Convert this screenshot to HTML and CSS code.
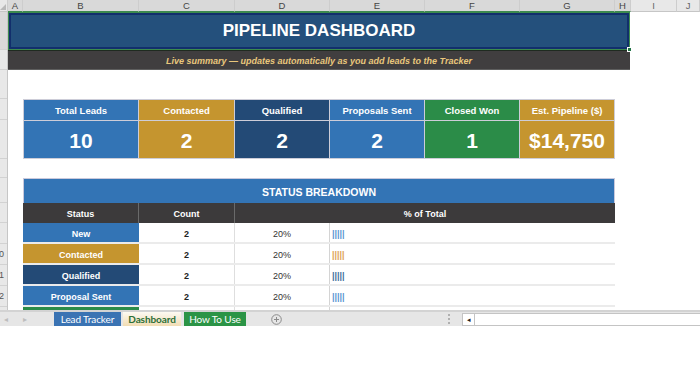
FILE: index.html
```html
<!DOCTYPE html>
<html lang="en">
<head>
    <meta charset="UTF-8">
    <meta name="viewport" content="width=device-width, initial-scale=1.0">
    <title>Pipeline Dashboard</title>
    <link rel="stylesheet" href="styles.css">
</head>
<body>
    <div class="colheads">
        <div class="corner"></div>
        <div class="colhead sel">A</div>
        <div class="colhead sel">B</div>
        <div class="colhead sel">C</div>
        <div class="colhead sel">D</div>
        <div class="colhead sel">E</div>
        <div class="colhead sel">F</div>
        <div class="colhead sel">G</div>
        <div class="colhead sel">H</div>
        <div class="colhead">I</div>
        <div class="colhead">J</div>
    </div>

    <div class="sheet">
        <div class="rowheads">
            <div class="rowhead sel h-title">1</div>
            <div class="rowhead h-sub">2</div>
            <div class="rowhead h-gap">3</div>
            <div class="rowhead h-khead">4</div>
            <div class="rowhead h-kval">5</div>
            <div class="rowhead h-gap2">6</div>
            <div class="rowhead h-sec">7</div>
            <div class="rowhead h-th">8</div>
            <div class="rowhead h-row">9</div>
            <div class="rowhead h-row num">10</div>
            <div class="rowhead h-row num">11</div>
            <div class="rowhead h-row num">12</div>
            <div class="rowhead h-row num">13</div>
        </div>

        <div class="cells">
            <div class="title">PIPELINE DASHBOARD<span class="handle"></span></div>
            <div class="subtitle">Live summary — updates automatically as you add leads to the Tracker</div>

            <div class="kpis">
                <div class="kpi-label blue">Total Leads</div>
                <div class="kpi-label gold">Contacted</div>
                <div class="kpi-label navy">Qualified</div>
                <div class="kpi-label blue">Proposals Sent</div>
                <div class="kpi-label green">Closed Won</div>
                <div class="kpi-label gold">Est. Pipeline ($)</div>
                <div class="kpi-value blue">10</div>
                <div class="kpi-value gold">2</div>
                <div class="kpi-value navy">2</div>
                <div class="kpi-value blue">2</div>
                <div class="kpi-value green">1</div>
                <div class="kpi-value gold">$14,750</div>
            </div>

            <div class="breakdown">
                <div class="sec-title">STATUS BREAKDOWN</div>
                <div class="thead">
                    <div>Status</div>
                    <div>Count</div>
                    <div>% of Total</div>
                </div>
                <div class="trow">
                    <div class="status blue">New</div>
                    <div class="count">2</div>
                    <div class="pct">20%</div>
                    <div class="bar bar-blue">|||||</div>
                </div>
                <div class="trow">
                    <div class="status gold">Contacted</div>
                    <div class="count">2</div>
                    <div class="pct">20%</div>
                    <div class="bar bar-gold">|||||</div>
                </div>
                <div class="trow">
                    <div class="status navy">Qualified</div>
                    <div class="count">2</div>
                    <div class="pct">20%</div>
                    <div class="bar bar-navy">|||||</div>
                </div>
                <div class="trow">
                    <div class="status blue">Proposal Sent</div>
                    <div class="count">2</div>
                    <div class="pct">20%</div>
                    <div class="bar bar-blue">|||||</div>
                </div>
                <div class="trow">
                    <div class="status green">Closed Won</div>
                    <div class="count">1</div>
                    <div class="pct">10%</div>
                    <div class="bar bar-green">||</div>
                </div>
            </div>
        </div>
    </div>

    <div class="tabbar">
        <div class="tabs-left">
            <span class="nav">&#9666;</span>
            <span class="nav">&#9656;</span>
            <div class="tab tab-lead">Lead Tracker</div>
            <div class="tab tab-dash">Dashboard</div>
            <div class="tab tab-how">How To Use</div>
            <svg class="add" width="11" height="11" viewBox="0 0 11 11">
                <circle cx="5.5" cy="5.5" r="4.8" fill="none" stroke="#8a8a8a" stroke-width="1"/>
                <path d="M5.5 3v5M3 5.5h5" stroke="#8a8a8a" stroke-width="1"/>
            </svg>
            <svg class="grip" width="3" height="10" viewBox="0 0 3 10">
                <rect x="0" y="0" width="2" height="2" fill="#b0b0b0"/>
                <rect x="0" y="4" width="2" height="2" fill="#b0b0b0"/>
                <rect x="0" y="8" width="2" height="2" fill="#b0b0b0"/>
            </svg>
        </div>
        <div class="hscroll">
            <div class="hscroll-btn">&#9666;</div>
        </div>
    </div>
</body>
</html>
```

FILE: styles.css
```css
body {
    margin: 0;
    width: 700px;
    height: 384px;
    overflow: hidden;
    background-color: white;
    font-family: "Liberation Sans", Arial, sans-serif;
}

/* column letters */
.colheads {
    display: grid;
    grid-template-columns: 8px 15px 116px 96px 95px 95px 95px 95px 16px 46px 1fr;
    height: 12px;
}
.colhead, .corner {
    box-sizing: border-box;
    background-color: #e8e8e8;
    border-right: 1px solid #cdcdcd;
    border-bottom: 1px solid #c6c6c6;
    font-size: 9.5px;
    line-height: 11px;
    color: #666;
    text-align: center;
}
.colhead.sel {
    background-color: #d9d9d9;
    border-bottom-color: #3c8a4e;
    color: #444;
}
.corner {
    display: flex;
    justify-content: flex-end;
    align-items: flex-end;
    padding: 0 1px 1px 0;
}
.corner::after {
    content: "";
    border-left: 6px solid transparent;
    border-bottom: 6px solid #b9b9b9;
}

/* sheet body */
.sheet {
    display: flex;
    height: 298px;
    overflow: hidden;
}
.rowheads {
    width: 8px;
    flex: none;
    box-sizing: border-box;
    background-color: #e8e8e8;
    border-right: 1px solid #c6c6c6;
}
.rowhead {
    box-sizing: border-box;
    border-bottom: 1px solid #d2d2d2;
    display: flex;
    align-items: center;
    justify-content: flex-end;
    padding-right: 3px;
    overflow: hidden;
    white-space: nowrap;
    font-size: 9px;
    color: transparent;
}
.rowhead.num {
    color: #555;
}
.rowhead.sel {
    background-color: #d9d9d9;
}
.h-title { height: 38px; }
.h-sub { height: 20px; }
.h-gap { height: 29px; }
.h-khead { height: 21px; }
.h-kval { height: 39px; }
.h-gap2 { height: 19px; }
.h-sec { height: 25px; }
.h-th { height: 20px; }
.h-row { height: 21px; }

.cells {
    flex: 1;
}

.blue { background-color: #3374b5; }
.gold { background-color: #c5952f; }
.navy { background-color: #234a76; }
.green { background-color: #2b8c48; }

/* title + subtitle */
.title {
    position: relative;
    width: 622px;
    height: 38px;
    box-sizing: border-box;
    display: flex;
    align-items: center;
    justify-content: center;
    background-color: #24507c;
    border: 1px solid #3c8a4e;
    box-shadow: inset 0 0 0 2px #122f6c;
    color: white;
    font-size: 17px;
    font-weight: bold;
}
.handle {
    position: absolute;
    right: -3px;
    bottom: -3px;
    width: 3px;
    height: 3px;
    background-color: #217346;
    border: 1px solid white;
}
.subtitle {
    width: 622px;
    height: 20px;
    box-sizing: border-box;
    display: flex;
    align-items: center;
    justify-content: center;
    padding-top: 1px;
    background-color: #403e3f;
    border-top: 1px solid #1f2a20;
    border-bottom: 1px solid #5e5e5e;
    color: #e9c77c;
    font-size: 9px;
    font-weight: bold;
    font-style: italic;
}

/* KPI cards */
.kpis {
    margin: 29px 0 0 15px;
    width: 592px;
    box-sizing: border-box;
    display: grid;
    grid-template-columns: 114px 95px 94px 94px 94px 94px;
    grid-template-rows: 20px 37px;
    gap: 1px;
    padding: 1px;
    background-color: #cdcdd8;
}
.kpi-label, .kpi-value {
    display: flex;
    align-items: center;
    justify-content: center;
    color: white;
    font-weight: bold;
}
.kpi-label {
    font-size: 9.5px;
}
.kpi-value {
    padding-top: 2px;
    font-size: 21px;
}

/* status breakdown */
.breakdown {
    margin: 19px 0 0 15px;
    width: 592px;
}
.sec-title {
    height: 25px;
    box-sizing: border-box;
    display: flex;
    align-items: center;
    justify-content: center;
    padding-top: 1px;
    background-color: #3374b5;
    border: 1px solid #c9c9dc;
    border-bottom: none;
    color: white;
    font-size: 10.5px;
    font-weight: bold;
}
.thead {
    display: grid;
    grid-template-columns: 116px 96px 1fr;
    height: 20px;
    background-color: #3c3a3b;
    color: white;
    font-size: 9px;
    font-weight: bold;
}
.thead div {
    display: flex;
    align-items: center;
    justify-content: center;
    padding-top: 2px;
    border-right: 1px solid #6a6a6a;
}
.thead div:last-child {
    border-right: none;
}
.trow {
    display: grid;
    grid-template-columns: 116px 96px 95px 1fr;
    height: 21px;
    box-sizing: border-box;
    border-bottom: 2px solid #ebebeb;
    font-size: 9px;
}
.trow div {
    display: flex;
    align-items: center;
    padding-top: 2px;
}
.status {
    justify-content: center;
    color: white;
    font-weight: bold;
}
.count {
    justify-content: center;
    border-right: 1px solid #dedede;
    color: #222;
    font-weight: bold;
}
.pct {
    justify-content: center;
    border-right: 1px solid #d4d4d4;
    color: #333;
}
.bar {
    padding-left: 2px;
    font-size: 9px;
    font-weight: bold;
}
.bar-blue { color: #5b97d3; }
.bar-gold { color: #e0a456; }
.bar-navy { color: #3f6f9c; }
.bar-green { color: #3fa45d; }

/* sheet tabs */
.tabbar {
    display: flex;
    height: 16px;
    box-sizing: border-box;
    border-top: 2px solid #d3d3d3;
    background-color: #e6e6e6;
}
.tabs-left {
    width: 462px;
    flex: none;
    display: flex;
    align-items: center;
}
.nav {
    width: 19px;
    text-align: center;
    font-size: 8px;
    color: #bdbdbd;
}
.nav:first-child {
    margin-left: -4px;
}
.tab {
    height: 14px;
    box-sizing: border-box;
    align-self: flex-end;
    overflow: hidden;
    text-align: center;
    font-family: Lato, "Open Sans", sans-serif;
    font-size: 10px;
    letter-spacing: -0.1px;
    line-height: 14px;
    white-space: nowrap;
}
.tab-lead {
    width: 67px;
    margin-left: 20px;
    background-color: #3a73b3;
    color: white;
}
.tab-dash {
    width: 58px;
    margin-left: 2px;
    background: linear-gradient(#fdfaf3, #f1dcb3);
    color: #2d6f37;
    font-weight: bold;
}
.tab-how {
    width: 62px;
    margin-left: 3px;
    background-color: #2b9446;
    color: white;
}
.add {
    margin-left: 25px;
}
.grip {
    margin-left: auto;
    margin-right: 11px;
}
.hscroll {
    flex: 1;
    align-self: flex-end;
    height: 13px;
    box-sizing: border-box;
    background-color: white;
    border: 1px solid #c4c4c4;
    border-right: none;
    display: flex;
}
.hscroll-btn {
    width: 11px;
    border-right: 1px solid #c4c4c4;
    font-size: 7px;
    line-height: 11px;
    text-align: center;
    color: #222;
}
```
